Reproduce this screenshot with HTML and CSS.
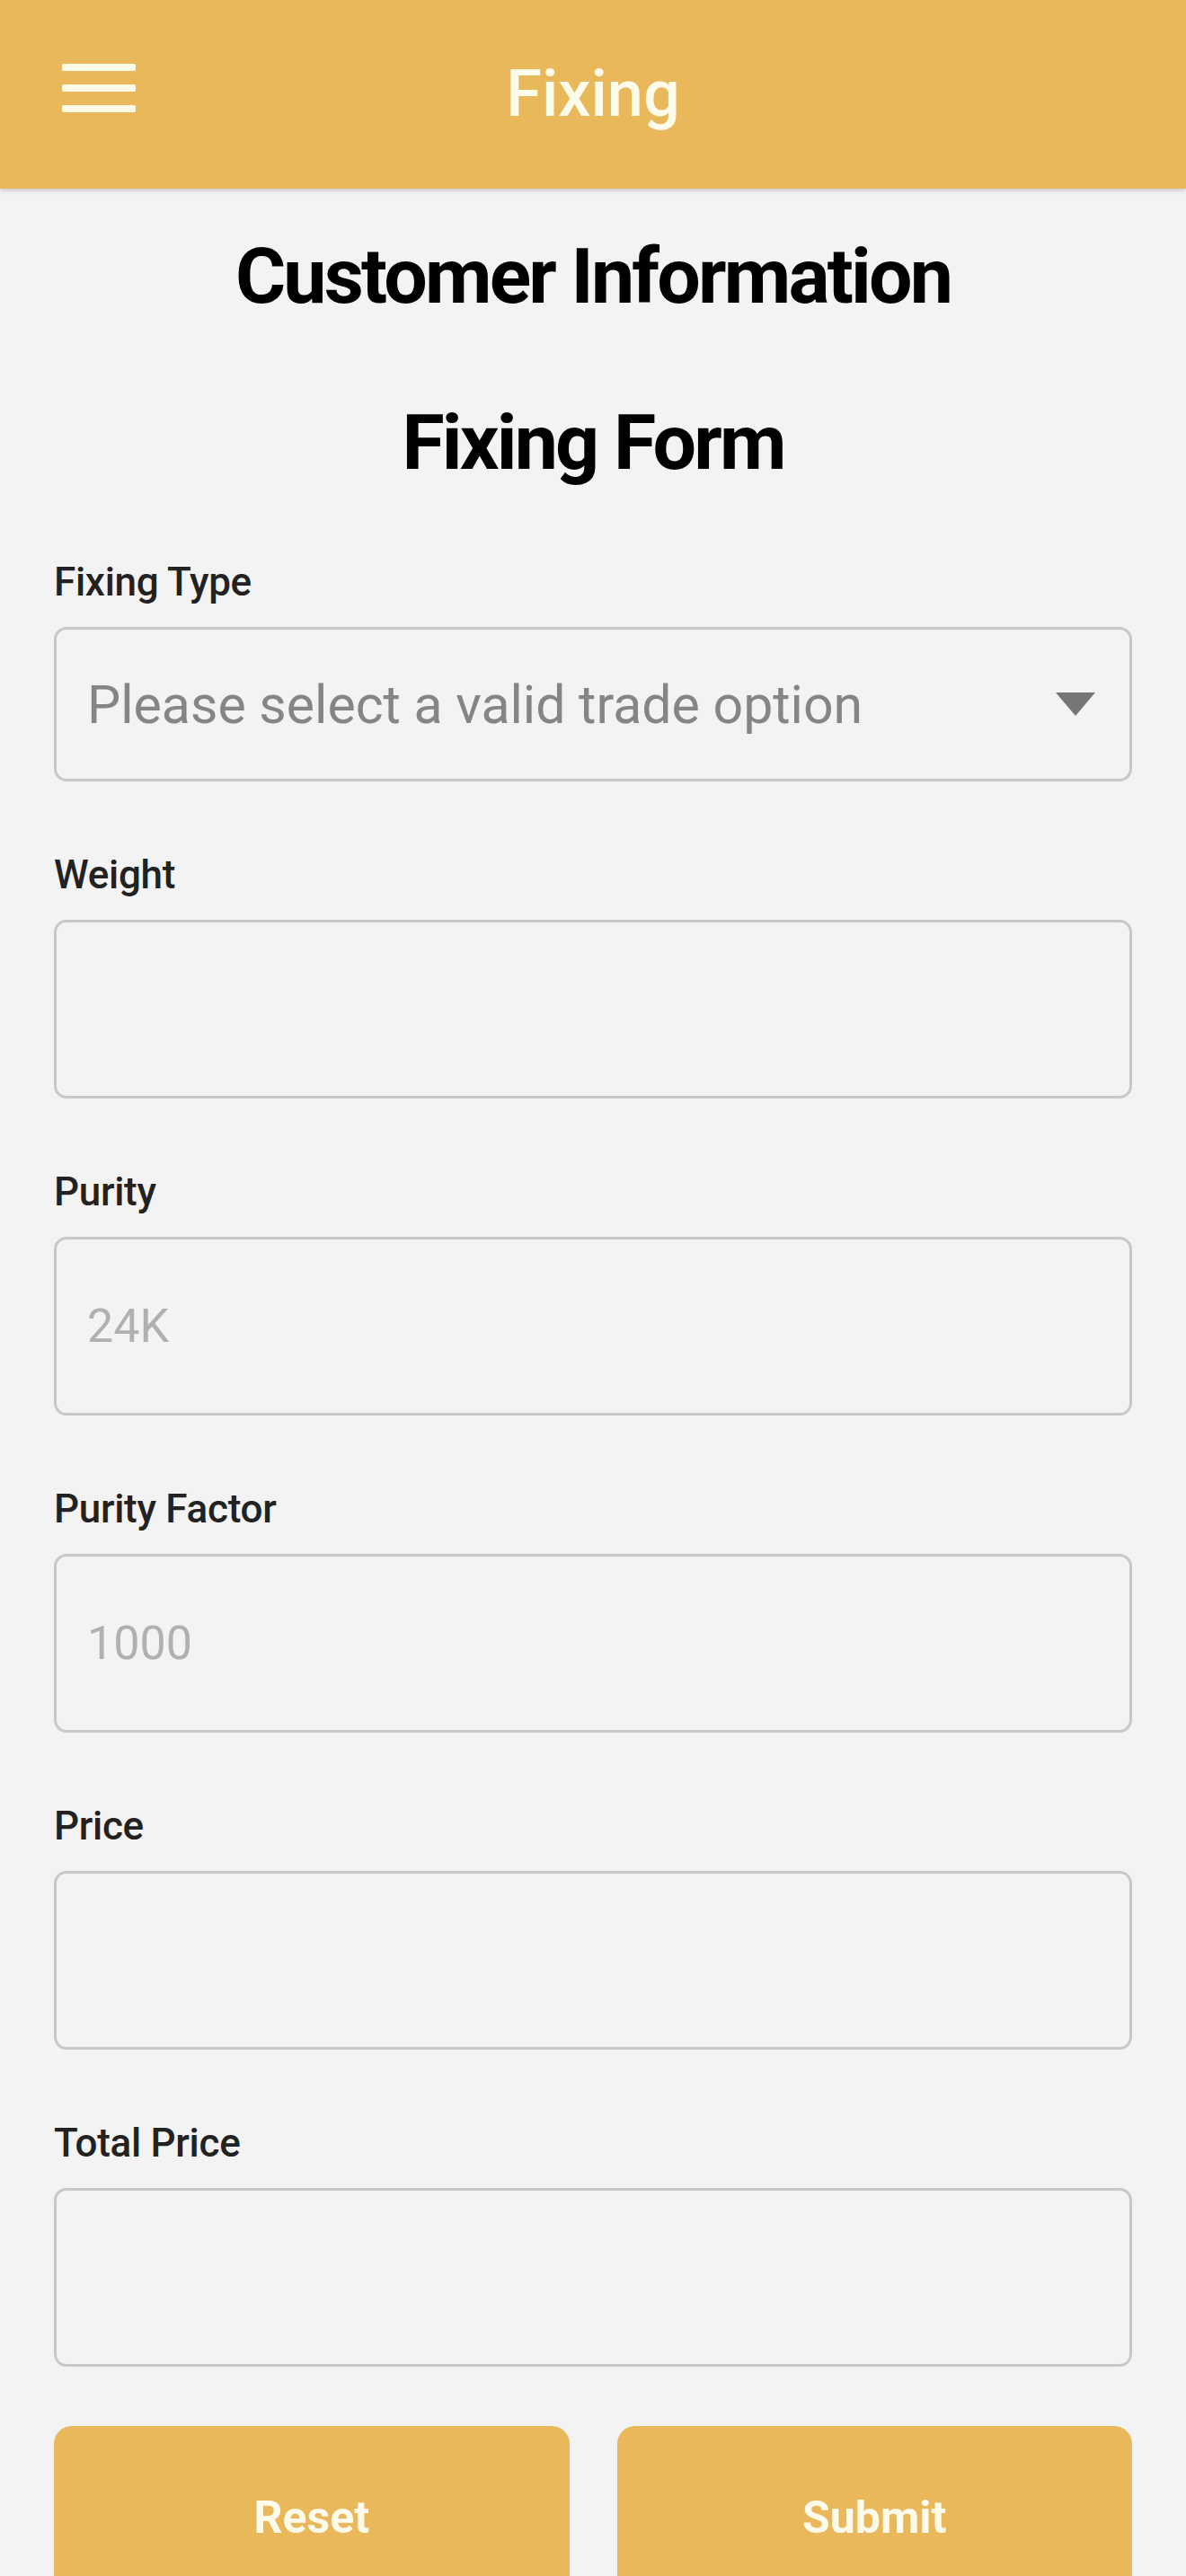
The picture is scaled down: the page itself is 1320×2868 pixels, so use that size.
FILE: index.html
```html
<!DOCTYPE html>
<html lang="en">
<head>
<meta charset="utf-8">
<title>Fixing</title>
<link rel="stylesheet" href="styles.css">
</head>
<body>
<header class="appbar">
  <div class="menu" aria-label="Menu">
    <svg width="82" height="56" viewBox="0 0 82 56">
      <rect x="0" y="0" width="82" height="8" rx="2" fill="#fffbe9"/>
      <rect x="0" y="23" width="82" height="8" rx="2" fill="#fffbe9"/>
      <rect x="0" y="46" width="82" height="8" rx="2" fill="#fffbe9"/>
    </svg>
  </div>
  <h1 class="appbar-title">Fixing</h1>
  <div class="spacer"></div>
</header>
<main class="content">
  <h2 class="title">Customer Information</h2>
  <h2 class="title title-second">Fixing Form</h2>
  <form class="form">
    <div class="field">
      <div class="label">Fixing Type</div>
      <div class="box select">
        <span class="placeholder">Please select a valid trade option</span>
        <svg class="caret" width="44" height="26" viewBox="0 0 44 26"><polygon points="0,0 44,0 22,26" fill="#767676"/></svg>
      </div>
    </div>
    <div class="field">
      <div class="label">Weight</div>
      <div class="box"></div>
    </div>
    <div class="field">
      <div class="label">Purity</div>
      <div class="box"><span class="value">24K</span></div>
    </div>
    <div class="field">
      <div class="label">Purity Factor</div>
      <div class="box"><span class="value">1000</span></div>
    </div>
    <div class="field">
      <div class="label">Price</div>
      <div class="box"></div>
    </div>
    <div class="field field-last">
      <div class="label">Total Price</div>
      <div class="box"></div>
    </div>
    <div class="actions">
      <button type="button" class="btn">Reset</button>
      <button type="button" class="btn">Submit</button>
    </div>
  </form>
</main>
</body>
</html>
```

FILE: styles.css
```css
* { box-sizing: border-box; }
html, body { margin: 0; padding: 0; }
body {
  background: #f3f3f3;
  font-family: Roboto, "Noto Sans", "Liberation Sans", sans-serif;
  height: 2868px;
  overflow: hidden;
}
.appbar {
  height: 210px;
  background: #e8b85b;
  display: grid;
  grid-template-columns: 1fr auto 1fr;
  align-items: center;
  box-shadow: 0 2px 5px rgba(0,0,0,0.18);
  position: relative;
}
.menu {
  margin-left: 69px;
  margin-bottom: 12px;
  width: 82px;
  height: 56px;
}
.menu svg { display: block; }
.appbar-title {
  margin: 0;
  font-weight: 500;
  font-size: 72px;
  color: #fffbea;
  line-height: 1;
}
.content {
  padding: 0 60px;
}
.title {
  margin: 45px 0 0;
  text-align: center;
  font-weight: 700;
  font-size: 86px;
  letter-spacing: -2.8px;
  line-height: 106px;
  color: #000;
}
.title-second { margin-top: 79px; }
.form {
  margin-top: 77px;
  display: flex;
  flex-direction: column;
}
.field { margin-bottom: 79px; }
.field-last { margin-bottom: 66px; }
.label {
  font-size: 44px;
  line-height: 50px;
  font-weight: 500;
  color: #222;
  letter-spacing: -0.3px;
  margin-bottom: 25px;
}
.box {
  height: 199px;
  border: 3px solid #c8c8c8;
  border-radius: 14px;
  padding: 0 34px;
  display: flex;
  align-items: center;
}
.select {
  height: 172px;
  justify-content: space-between;
  padding-right: 38px;
}
.placeholder {
  font-size: 59px;
  color: #858585;
}
.value {
  font-size: 52px;
  color: #b0b0b0;
}
.actions {
  display: grid;
  grid-template-columns: 1fr 1fr;
  column-gap: 53px;
}
.btn {
  height: 204px;
  border: none;
  border-radius: 20px;
  background: #e8b85b;
  color: #fffbea;
  font-family: Roboto, "Noto Sans", "Liberation Sans", sans-serif;
  font-weight: 700;
  font-size: 50px;
}
```
